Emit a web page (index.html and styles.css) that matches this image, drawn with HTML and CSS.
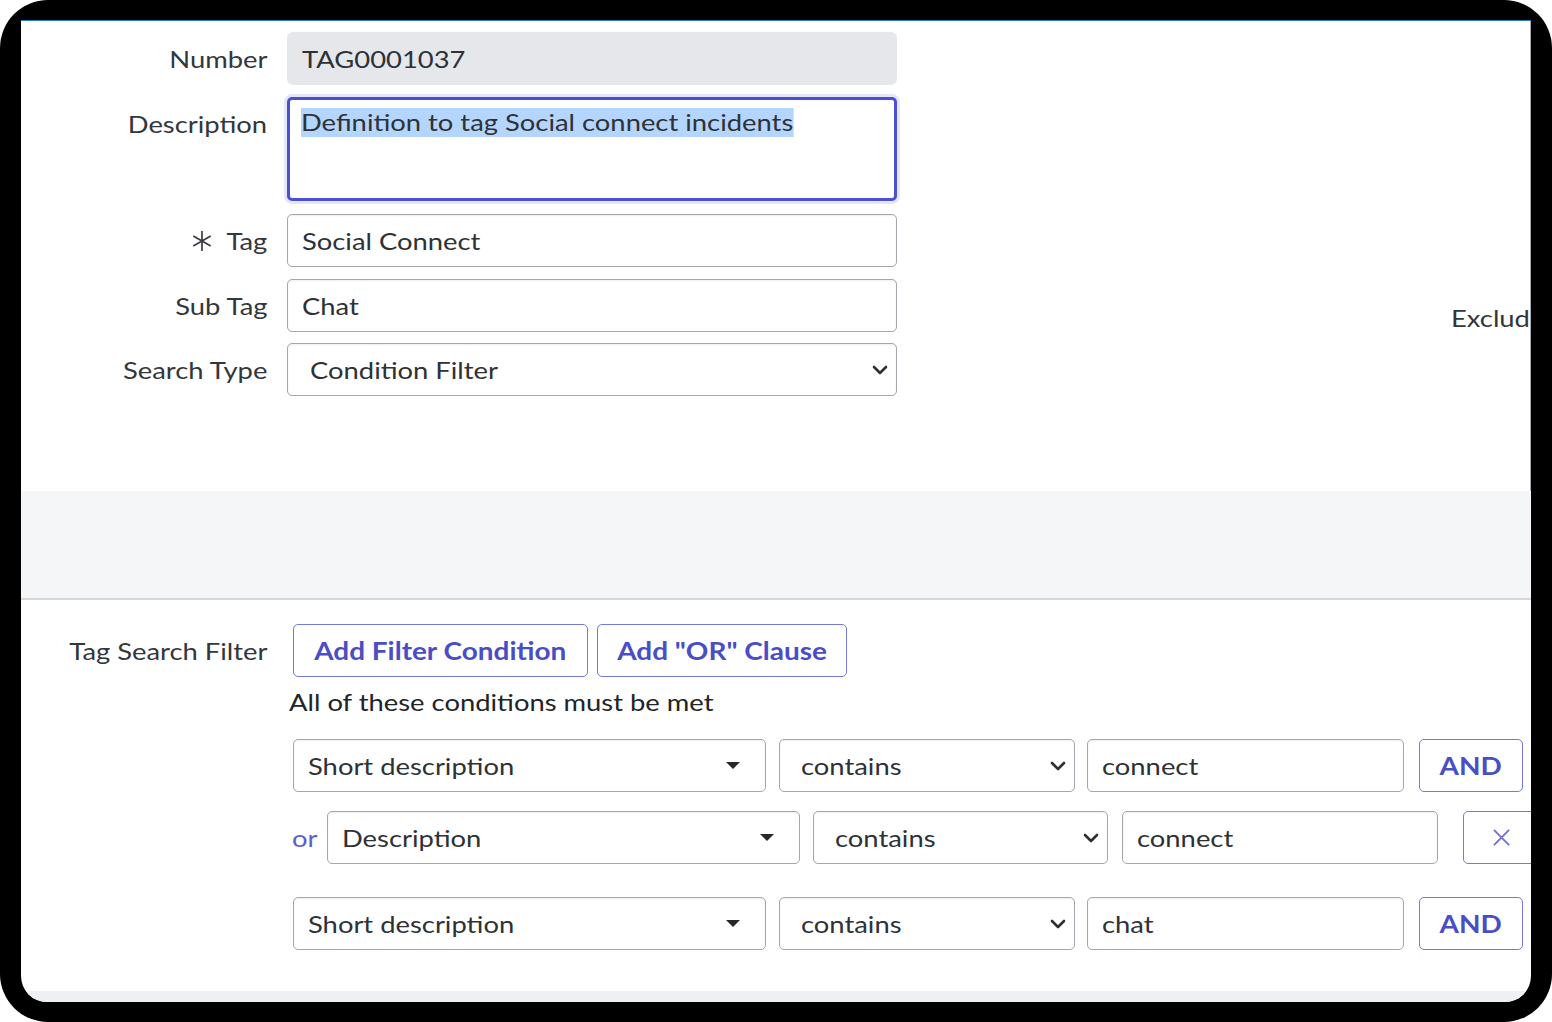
FILE: index.html
```html
<!DOCTYPE html>
<html>
<head>
<meta charset="utf-8">
<title>Tag Definition</title>
<link rel="stylesheet" href="styles.css">
</head>
<body>
<div class="frame">
  <div class="screen">
    <div class="top">
      <div class="form">
        <div class="row">
          <div class="label"><span class="t tr">Number</span></div>
          <div class="field readonly"><span class="t">TAG0001037</span></div>
        </div>
        <div class="row row-desc">
          <div class="label"><span class="t tr">Description</span></div>
          <div class="field textarea"><span class="t sel">Definition to tag Social connect incidents</span></div>
        </div>
        <div class="row row-tag">
          <div class="label"><svg class="req" viewBox="0 0 22 22"><path d="M11 1V21M2.3 6L19.7 16M2.3 16L19.7 6"/></svg><span class="t tr">Tag</span></div>
          <div class="field"><span class="t">Social Connect</span></div>
        </div>
        <div class="row row-sub">
          <div class="label"><span class="t tr">Sub Tag</span></div>
          <div class="field"><span class="t">Chat</span></div>
        </div>
        <div class="row row-type">
          <div class="label"><span class="t tr">Search Type</span></div>
          <div class="field select"><span class="t">Condition Filter</span><svg class="chev" viewBox="0 0 16 10"><path d="M2 2L8 8L14 2"/></svg></div>
        </div>
      </div>
      <div class="side">
        <div class="side-label"><span class="t">Exclud</span></div>
      </div>
    </div>
    <div class="band"></div>
    <div class="filter">
      <div class="filter-head">
        <div class="label"><span class="t tr">Tag Search Filter</span></div>
        <div class="btns">
          <button class="btn btn-cond"><span class="tb">Add Filter Condition</span></button>
          <button class="btn btn-or"><span class="tb">Add "OR" Clause</span></button>
        </div>
      </div>
      <div class="filter-body">
        <div class="note"><span class="t">All of these conditions must be met</span></div>
        <div class="cond cond-1">
          <div class="field picker"><span class="t">Short description</span><svg class="caret" viewBox="0 0 16 8"><path d="M1 0H15L8 7Z"/></svg></div>
          <div class="field op"><span class="t">contains</span><svg class="chev" viewBox="0 0 16 10"><path d="M2 2L8 8L14 2"/></svg></div>
          <div class="field val"><span class="t">connect</span></div>
          <button class="btn btn-and"><span class="tb">AND</span></button>
        </div>
        <div class="cond cond-2">
          <span class="or"><span class="t">or</span></span>
          <div class="field picker"><span class="t">Description</span><svg class="caret" viewBox="0 0 16 8"><path d="M1 0H15L8 7Z"/></svg></div>
          <div class="field op op-2"><span class="t">contains</span><svg class="chev" viewBox="0 0 16 10"><path d="M2 2L8 8L14 2"/></svg></div>
          <div class="field val val-2"><span class="t">connect</span></div>
          <button class="btn btn-x"><svg class="x" viewBox="0 0 20 20"><path d="M2 2L18 18M18 2L2 18"/></svg></button>
        </div>
        <div class="cond cond-3">
          <div class="field picker"><span class="t">Short description</span><svg class="caret" viewBox="0 0 16 8"><path d="M1 0H15L8 7Z"/></svg></div>
          <div class="field op"><span class="t">contains</span><svg class="chev" viewBox="0 0 16 10"><path d="M2 2L8 8L14 2"/></svg></div>
          <div class="field val"><span class="t">chat</span></div>
          <button class="btn btn-and"><span class="tb">AND</span></button>
        </div>
      </div>
    </div>
    <div class="foot"></div>
  </div>
</div>
</body>
</html>
```
FILE: styles.css
```css
* { box-sizing: border-box; }
html, body { margin: 0; padding: 0; background: #ffffff; }
body {
  font-family: Lato, "Open Sans", "Liberation Sans", sans-serif;
  color: #2f3338;
  width: 1552px;
  height: 1022px;
  overflow: hidden;
}
/* the reference is horizontally stretched: widen glyphs to match */
.t {
  display: inline-block;
  transform: scaleX(1.19);
  transform-origin: left center;
}
.tr { transform-origin: right center; }
.tb {
  display: inline-block;
  transform: scaleX(1.165);
  transform-origin: center center;
}
.frame {
  width: 1552px;
  height: 1022px;
  background: #000;
  border-radius: 48px;
  padding: 20px 21px 20px 21px;
}
.screen {
  width: 1510px;
  height: 982px;
  background: #fff;
  border-top: 1px solid #2b7cbf;
  border-radius: 0 0 26px 26px;
  overflow: hidden;
  display: flex;
  flex-direction: column;
}
.top {
  height: 470px;
  flex: none;
  display: flex;
  padding-top: 11px;
  border-right: 1px solid #a9adb3;
}
.form { width: 876px; flex: none; }
.row { display: flex; align-items: flex-start; }
.label {
  width: 246px;
  flex: none;
  height: 53px;
  display: flex;
  align-items: center;
  justify-content: flex-end;
  font-size: 23px;
  color: #33373c;
  white-space: nowrap;
}
.row .field { margin-left: 20px; width: 610px; }
.field {
  height: 53px;
  flex: none;
  border: 1.5px solid #a3a7ae;
  border-radius: 5px;
  box-shadow: inset 0 1px 2px rgba(0,0,0,0.07);
  background: #fff;
  display: flex;
  align-items: center;
  padding-left: 14px;
  font-size: 23px;
  color: #2e3237;
  white-space: nowrap;
}
.readonly {
  background: #e6e7ea;
  border: none;
  box-shadow: none;
  border-radius: 6px;
  padding-left: 15px;
}
.row-desc { margin-top: 12px; }
.row-desc .label { height: 53px; }
.textarea {
  height: 104px;
  border: 3px solid #4b4fd2;
  border-radius: 5px;
  box-shadow: 0 0 0 3px #e5e7f9;
  align-items: flex-start;
  padding-left: 11px;
  padding-top: 8px;
}
.sel { background: #b4d5fd; line-height: 29px; }
.row-tag { margin-top: 13px; }
.row-sub { margin-top: 12px; }
.row-type { margin-top: 11px; }
.req {
  width: 22px;
  height: 22px;
  margin-right: 20px;
  fill: none;
  stroke: #3a3e44;
  stroke-width: 1.7;
}
.select { justify-content: space-between; padding-left: 22px; padding-right: 8px; }
.chev {
  width: 16px;
  height: 10px;
  fill: none;
  stroke: #2c2f34;
  stroke-width: 2.6;
  stroke-linecap: round;
  stroke-linejoin: round;
}
.side { flex: none; margin-left: 554px; padding-top: 271px; }
.side-label { font-size: 23px; color: #33373c; white-space: nowrap; line-height: 30px; }

.band {
  height: 109px;
  flex: none;
  background: #f5f6f8;
  border-bottom: 2px solid #d4d7dc;
}
.filter { flex: 1; padding-top: 24px; }
.filter-head { display: flex; align-items: center; }
.btns { display: flex; margin-left: 26px; }
.btn {
  height: 53px;
  border: 1.5px solid #7579dd;
  border-radius: 5px;
  background: #fff;
  color: #4a4ec6;
  font-family: Lato, "Open Sans", "Liberation Sans", sans-serif;
  font-weight: 700;
  font-size: 24px;
  padding: 0;
  display: flex;
  align-items: center;
  justify-content: center;
  flex: none;
}
.btn-cond { width: 295px; }
.btn-or { width: 250px; margin-left: 9px; }
.filter-body { padding-left: 268px; }
.note {
  font-size: 23px;
  color: #222427;
  line-height: 30px;
  margin-top: 10px;
}
.cond { display: flex; align-items: center; padding-left: 4px; }
.cond-1 { margin-top: 22px; }
.cond-2 { margin-top: 19px; padding-left: 3px; }
.cond-3 { margin-top: 33px; }
.or { color: #5a5ed2; font-size: 23px; width: 26px; margin-right: 9px; flex: none; }
.picker { width: 473px; justify-content: space-between; padding-right: 24px; }
.caret { width: 16px; height: 8px; fill: #24272b; }
.op { width: 296px; margin-left: 13px; justify-content: space-between; padding-left: 21px; padding-right: 8px; }
.op-2 { width: 295px; }
.val { width: 317px; margin-left: 12px; }
.val-2 { width: 316px; margin-left: 14px; }
.btn-and { width: 104px; margin-left: 15px; }
.btn-x { width: 76px; margin-left: 25px; }
.x { width: 19px; height: 19px; fill: none; stroke: #6e72da; stroke-width: 2; }
.foot { height: 11px; flex: none; background: #eef0f4; }
```
